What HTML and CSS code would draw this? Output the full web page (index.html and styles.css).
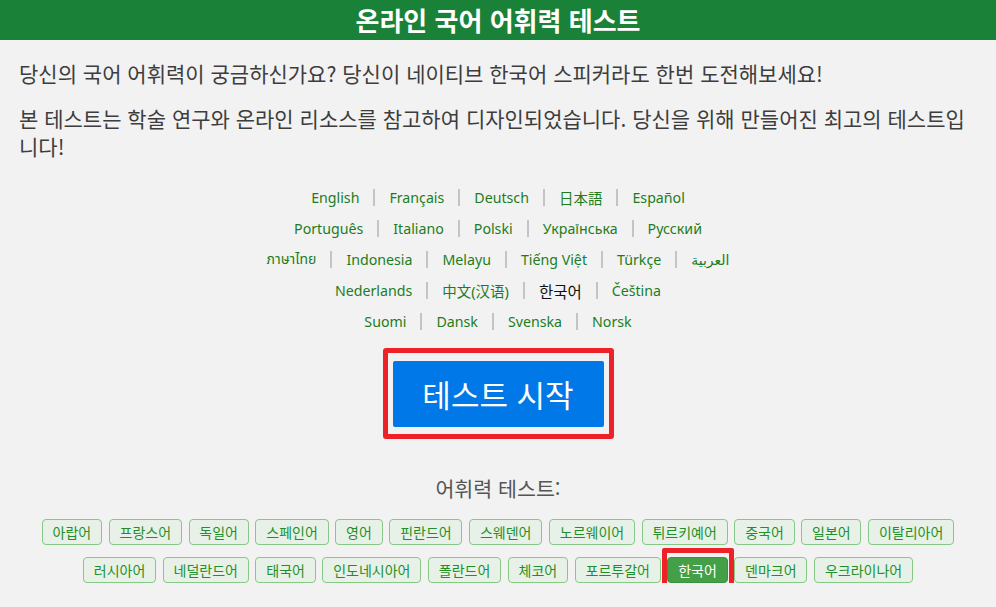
FILE: index.html
```html
<!DOCTYPE html>
<html lang="ko">
<head>
<meta charset="utf-8">
<title>온라인 국어 어휘력 테스트</title>
<link rel="stylesheet" href="styles.css">
</head>
<body>
<header class="top">
  <h1 class="top-title">온라인 국어 어휘력 테스트</h1>
</header>
<main class="page">
  <p class="intro">당신의 국어 어휘력이 궁금하신가요? 당신이 네이티브 한국어 스피커라도 한번 도전해보세요!</p>
  <p class="intro">본 테스트는 학술 연구와 온라인 리소스를 참고하여 디자인되었습니다. 당신을 위해 만들어진 최고의 테스트입니다!</p>

  <nav class="langs">
    <div class="lang-row">
      <a class="lang" href="#">English</a>
      <a class="lang" href="#">Français</a>
      <a class="lang" href="#">Deutsch</a>
      <a class="lang cjk-jp" href="#">日本語</a>
      <a class="lang" href="#">Español</a>
    </div>
    <div class="lang-row">
      <a class="lang" href="#">Português</a>
      <a class="lang" href="#">Italiano</a>
      <a class="lang" href="#">Polski</a>
      <a class="lang" href="#">Українська</a>
      <a class="lang" href="#">Русский</a>
    </div>
    <div class="lang-row">
      <a class="lang thai" href="#">ภาษาไทย</a>
      <a class="lang" href="#">Indonesia</a>
      <a class="lang" href="#">Melayu</a>
      <a class="lang" href="#">Tiếng Việt</a>
      <a class="lang" href="#">Türkçe</a>
      <a class="lang arabic" href="#">العربية</a>
    </div>
    <div class="lang-row">
      <a class="lang" href="#">Nederlands</a>
      <a class="lang cjk-sc" href="#">中文(汉语)</a>
      <span class="lang current">한국어</span>
      <a class="lang" href="#">Čeština</a>
    </div>
    <div class="lang-row">
      <a class="lang" href="#">Suomi</a>
      <a class="lang" href="#">Dansk</a>
      <a class="lang" href="#">Svenska</a>
      <a class="lang" href="#">Norsk</a>
    </div>
  </nav>

  <div class="start-wrap">
    <button class="start marked-start" type="button">테스트 시작</button>
  </div>

  <h2 class="vocab-title">어휘력 테스트:</h2>

  <div class="tags">
    <div class="tag-row">
      <a class="tag" href="#">아랍어</a>
      <a class="tag" href="#">프랑스어</a>
      <a class="tag" href="#">독일어</a>
      <a class="tag" href="#">스페인어</a>
      <a class="tag" href="#">영어</a>
      <a class="tag" href="#">핀란드어</a>
      <a class="tag" href="#">스웨덴어</a>
      <a class="tag" href="#">노르웨이어</a>
      <a class="tag" href="#">튀르키예어</a>
      <a class="tag" href="#">중국어</a>
      <a class="tag" href="#">일본어</a>
      <a class="tag" href="#">이탈리아어</a>
    </div>
    <div class="tag-row">
      <a class="tag" href="#">러시아어</a>
      <a class="tag" href="#">네덜란드어</a>
      <a class="tag" href="#">태국어</a>
      <a class="tag" href="#">인도네시아어</a>
      <a class="tag" href="#">폴란드어</a>
      <a class="tag" href="#">체코어</a>
      <a class="tag" href="#">포르투갈어</a>
      <a class="tag tag-active marked-tag" href="#">한국어</a>
      <a class="tag" href="#">덴마크어</a>
      <a class="tag" href="#">우크라이나어</a>
    </div>
  </div>
</main>
</body>
</html>
```

FILE: styles.css
```css
* {
  box-sizing: border-box;
}

html, body {
  margin: 0;
  padding: 0;
}

body {
  background: #f2f2f2;
  color: #333333;
  font-family: "Noto Sans CJK KR", "Noto Sans", sans-serif;
}

.top {
  background: #1a8238;
  height: 40px;
  display: flex;
  align-items: center;
  justify-content: center;
}

.top-title {
  margin: 0;
  color: #ffffff;
  font-size: 26px;
  font-weight: 700;
  line-height: 40px;
}

.page {
  padding: 19px 19px 0 19px;
}

.intro {
  margin: 0 0 17px 0;
  font-size: 21px;
  line-height: 28px;
  color: #3d3d3d;
}

.langs {
  margin-top: 22px;
  display: flex;
  flex-direction: column;
}

.lang-row {
  display: flex;
  justify-content: center;
  align-items: center;
  height: 31px;
  font-family: "Noto Sans", "Noto Sans CJK KR", "DejaVu Sans", sans-serif;
  font-size: 14.2px;
}

.lang {
  color: #1d7d1d;
  text-decoration: none;
  display: flex;
  align-items: center;
}

.lang + .lang::before {
  content: "";
  display: inline-block;
  width: 2px;
  height: 17px;
  background: #c4c4c4;
  margin: 0 14px;
}

.cjk-jp {
  font-family: "Noto Sans CJK JP", sans-serif;
  font-size: 14.5px;
}

.cjk-sc {
  font-family: "Noto Sans", "Noto Sans CJK SC", sans-serif;
  font-size: 14.5px;
}

.thai {
  font-family: "Noto Sans Thai", "DejaVu Sans", "Noto Sans", sans-serif;
  font-size: 14px;
}

.arabic {
  font-family: "DejaVu Sans", "Noto Sans Arabic", sans-serif;
  font-size: 14px;
}

.current {
  color: #111111;
  font-family: "Noto Sans CJK KR", sans-serif;
  font-size: 15.5px;
}

.start-wrap {
  display: flex;
  justify-content: center;
  margin-top: 24px;
}

.start {
  position: relative;
  background: #0078e7;
  color: #ffffff;
  border: none;
  border-radius: 2px;
  font-family: "Noto Sans CJK KR", sans-serif;
  font-size: 31px;
  height: 66px;
  width: 211px;
  padding: 0;
  line-height: 66px;
  cursor: pointer;
}

.marked-start::after {
  content: "";
  position: absolute;
  top: -13px;
  left: -10px;
  right: -10px;
  bottom: -12px;
  border: 5px solid #ee2129;
  border-radius: 3px;
  pointer-events: none;
}

.vocab-title {
  margin: 47px 0 0 0;
  text-align: center;
  font-weight: 400;
  font-size: 20.6px;
  line-height: 28px;
  color: #555555;
}

.tags {
  margin-top: 17px;
  display: flex;
  flex-direction: column;
  gap: 12px;
}

.tag-row {
  display: flex;
  justify-content: center;
  gap: 6.7px;
}

.tag {
  position: relative;
  display: block;
  height: 26px;
  line-height: 24px;
  padding: 0 9.8px;
  border: 1px solid #86c886;
  border-radius: 4px;
  background: #e7f1e7;
  color: #1f8f27;
  font-size: 14px;
  text-decoration: none;
}

.tag-active {
  background: #43a047;
  border-color: #3b9140;
  color: #ffffff;
}

.marked-tag::after {
  content: "";
  position: absolute;
  top: -10px;
  left: -6px;
  right: -7px;
  bottom: -9px;
  border: 5px solid #ee2129;
  border-radius: 2px;
  pointer-events: none;
}
```
